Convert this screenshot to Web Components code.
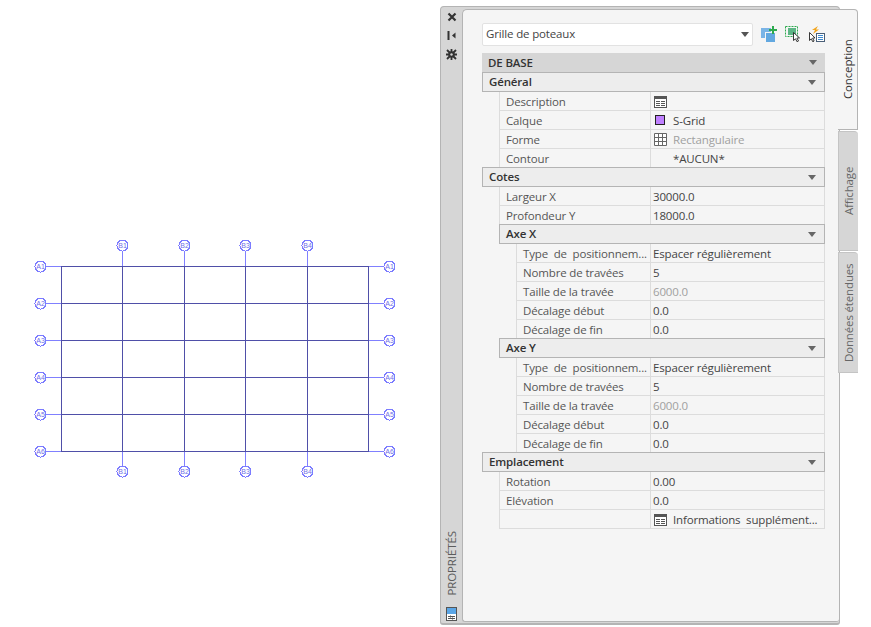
<!DOCTYPE html>
<html>
<head>
<meta charset="utf-8">
<title>Grille de poteaux</title>
<style>
  html, body { margin: 0; padding: 0; background: #fff; }
  body { width: 871px; height: 627px; overflow: hidden; display: flex; font-family: "Open Sans", "Liberation Sans", sans-serif; }
</style>
</head>
<body>
<grid-drawing></grid-drawing>
<props-palette>
  <combo-box slot="combo" value="Grille de poteaux"></combo-box>
  <prop-header kind="top">DE BASE</prop-header>
  <prop-header>Général</prop-header>
  <prop-row label="Description" icon="table"></prop-row>
  <prop-row label="Calque" icon="swatch" value="S-Grid"></prop-row>
  <prop-row label="Forme" icon="grid" value="Rectangulaire" muted></prop-row>
  <prop-row label="Contour" value="*AUCUN*" indent-value></prop-row>
  <prop-header>Cotes</prop-header>
  <prop-row label="Largeur X" value="30000.0"></prop-row>
  <prop-row label="Profondeur Y" value="18000.0"></prop-row>
  <prop-header level="1">Axe X</prop-header>
  <prop-row level="1" label="Type  de  positionnem..." value="Espacer régulièrement"></prop-row>
  <prop-row level="1" label="Nombre de travées" value="5"></prop-row>
  <prop-row level="1" label="Taille de la travée" value="6000.0" muted></prop-row>
  <prop-row level="1" label="Décalage début" value="0.0"></prop-row>
  <prop-row level="1" label="Décalage de fin" value="0.0"></prop-row>
  <prop-header level="1">Axe Y</prop-header>
  <prop-row level="1" label="Type  de  positionnem..." value="Espacer régulièrement"></prop-row>
  <prop-row level="1" label="Nombre de travées" value="5"></prop-row>
  <prop-row level="1" label="Taille de la travée" value="6000.0" muted></prop-row>
  <prop-row level="1" label="Décalage début" value="0.0"></prop-row>
  <prop-row level="1" label="Décalage de fin" value="0.0"></prop-row>
  <prop-header>Emplacement</prop-header>
  <prop-row label="Rotation" value="0.00"></prop-row>
  <prop-row label="Elévation" value="0.0"></prop-row>
  <prop-row label="" icon="table" value="Informations  supplément..."></prop-row>
</props-palette>
<script>
  const ICONS = {
    table: '<svg width="13" height="12" viewBox="0 0 13 12"><rect x=".5" y=".5" width="12" height="11" fill="#fff" stroke="#555"/><path d="M1 1h11v2H1z" fill="#555"/><path d="M2 5.500h4M7 5.500h4M2 7.500h4M7 7.500h4M2 9.500h4M7 9.500h4" stroke="#555"/></svg>',
    swatch: '<svg width="13" height="12" viewBox="0 0 13 12"><rect x="1.500" y=".5" width="9" height="9" fill="#bf80ff" stroke="#222"/></svg>',
    grid: '<svg width="13" height="13" viewBox="0 0 13 13"><path d="M.5.5h12v12H.5zM4.500.5v12M8.500.5v12M.5 4.500h12M.5 8.500h12" fill="#fff" stroke="#666"/></svg>'
  };

  class GridDrawing extends HTMLElement {
    constructor () {
      super();
      const shadowRoot = this.attachShadow({ mode: 'open' });
      const xs = [61.5, 122.5, 184.5, 245.5, 307.5, 368.5];
      const ys = [266.5, 303.5, 340.5, 377.5, 414.5, 451.5];
      let lines = '';
      let bubbles = '';
      const bubble = (cx, cy, t) => `<circle cx="${cx}" cy="${cy}" r="5.5" fill="#fff" stroke="#7c7cff" shape-rendering="crispEdges"/>` +
        `<text x="${cx}" y="${cy + 2.5}" text-anchor="middle" font-size="7" fill="#7070e8">${t}</text>`;
      ys.forEach((y, i) => {
        lines += `<path d="M46 ${y}H61M369 ${y}H384" stroke="#8080ff"/>`;
        bubbles += bubble(40.5, y, 'A' + (i + 1)) + bubble(389.5, y, 'A' + (i + 1));
      });
      xs.forEach((x, i) => {
        if (i > 0 && i < 5) {
          lines += `<path d="M${x} 251V266M${x} 452V467" stroke="#8080ff"/>`;
          bubbles += bubble(x, 245.5, 'B' + i) + bubble(x, 471.5, 'B' + i);
        }
      });
      ys.forEach((y) => { lines += `<path d="M61 ${y}H369" stroke="#4f4fa8"/>`; });
      xs.forEach((x) => { lines += `<path d="M${x} 266V452" stroke="#4f4fa8"/>`; });
      shadowRoot.innerHTML = `
        <style>
          :host { display: block; width: 440px; height: 627px; flex: none; }
          svg { display: block; }
          text { font-family: "Liberation Sans", sans-serif; }
        </style>
        <svg width="440" height="627" shape-rendering="crispEdges">${lines}${bubbles}</svg>`;
    }
  }
  customElements.define('grid-drawing', GridDrawing);

  class PropsPalette extends HTMLElement {
    constructor () {
      super();
      const shadowRoot = this.attachShadow({ mode: 'open' });
      shadowRoot.innerHTML = `
        <style>
          :host { display: flex; width: 431px; height: 627px; flex: none; padding-top: 6px; box-sizing: border-box; font-size: 11.5px; letter-spacing: -.15px; color: #444; }
          .frame { width: 400px; height: 619px; flex: none; display: flex; box-sizing: border-box; background: #d6d6d6; border: 1px solid #b4b4b4; border-bottom-width: 2px; border-radius: 4px 4px 3px 3px; }
          .strip { width: 21px; flex: none; display: flex; flex-direction: column; align-items: center; box-sizing: border-box; }
          .btn { height: 19px; flex: none; display: flex; align-items: center; justify-content: center; }
          .title { margin-top: auto; writing-mode: vertical-rl; transform: rotate(180deg); color: #5c5c5c; font-size: 11.5px; letter-spacing: -.1px; }
          .foot { width: 11px; height: 14px; margin: 11px 0 2px; flex: none; }
          .inner { flex: 1; background: #f5f5f5; border: 1px solid #b4b4b4; border-right: 0; border-radius: 5px 0 3px 3px; margin: 2px 0 1px; padding: 13px 14px 0 19px; box-sizing: border-box; min-width: 0; }
          .combo-row { display: flex; align-items: center; height: 22px; margin-bottom: 8px; }
          .tools { display: flex; gap: 8px; margin-left: 8px; }
          .tabs { width: 20px; flex: none; display: flex; flex-direction: column; gap: 1px; margin: 3px 0 0 -2px; position: relative; }
          .tab { writing-mode: vertical-rl; transform: rotate(180deg); box-sizing: border-box; background: #d6d6d6; color: #666; border: 1px solid #c4c4c4; border-left: 0; border-radius: 0 0 0 4px; width: 20px; display: flex; align-items: center; justify-content: center; flex: none; }
          .tab.active { background: #f5f5f5; color: #333; height: 121px; border: 1px solid #b4b4b4; border-right: 0; border-radius: 0 0 0 4px; }
        </style>
        <div class="frame">
          <div class="strip">
            <div class="btn"><svg width="10" height="10" viewBox="0 0 10 10"><path d="M1.500 1.500l7 7M8.500 1.500l-7 7" stroke="#333" stroke-width="2.200"/></svg></div>
            <div class="btn"><svg width="9" height="9" viewBox="0 0 9 9"><path d="M1.500 0v9" stroke="#333" stroke-width="2"/><path d="M8.500 1.500v6L5 4.500z" fill="#333"/></svg></div>
            <div class="btn"><svg width="11" height="11" viewBox="0 0 11 11"><path d="M1 1l9 9M10 1l-9 9M5.500 0v11M0 5.500h11" stroke="#333" stroke-width="1.800"/><circle cx="5.500" cy="5.500" r="3.200" fill="#333"/><circle cx="5.500" cy="5.500" r="1.200" fill="#d6d6d6"/></svg></div>
            <div class="title">PROPRIÉTÉS</div>
            <svg class="foot" viewBox="0 0 11 14"><rect x=".5" y=".5" width="10" height="13" fill="#fff" stroke="#555"/><rect x="1" y="1" width="9" height="6" fill="#5ba6e6"/><path d="M2 9.500h7M2 11.500h7M4.500 8.500v2M6.500 10.500v2" stroke="#555"/></svg>
          </div>
          <div class="inner">
            <div class="combo-row">
              <slot name="combo"></slot>
              <div class="tools">
                <svg width="16" height="16" viewBox="0 0 16 16"><rect x="0" y="2" width="10" height="10" fill="#7ab4e6"/><rect x="4.500" y="6.500" width="10" height="10" fill="#62a8e0" stroke="#f5f5f5"/><path d="M12 0v8M8 4h8" stroke="#2eaa4e" stroke-width="2"/></svg>
                <svg width="16" height="16" viewBox="0 0 16 16"><rect x=".5" y=".5" width="12" height="10" fill="none" stroke="#2eaa4e" stroke-dasharray="2 1"/><rect x="3" y="2" width="8" height="7" fill="#5cb585"/><path d="M8.500 6.500v8l2-1.700 1.600 3 1.400-.8-1.600-2.900 2.600-.2z" fill="#fff" stroke="#222" stroke-width=".9"/></svg>
                <svg width="16" height="16" viewBox="0 0 16 16"><path d="M9 0L3 4h3L4 8l6-4.500H7l2-3.500z" fill="#f2a51c"/><path d="M.5 6.500v8l1.800-1.700 1.500 3 1.300-.8-1.500-2.900 2.400-.2z" fill="#fff" stroke="#222" stroke-width=".9"/><rect x="7.500" y="7.500" width="8" height="8" fill="#fff" stroke="#4a5f78"/><path d="M9 9.500h5M9 11.500h5M9 13.500h5" stroke="#3d8ad0"/></svg>
              </div>
            </div>
            <slot></slot>
          </div>
        </div>
        <div class="tabs">
          <div class="tab active">Conception</div>
          <div class="tab" style="height:120px">Affichage</div>
          <div class="tab" style="height:121px">Données étendues</div>
        </div>`;
    }
  }
  customElements.define('props-palette', PropsPalette);

  class ComboBox extends HTMLElement {
    constructor () {
      super();
      const shadowRoot = this.attachShadow({ mode: 'open' });
      shadowRoot.innerHTML = `
        <style>
          :host { display: flex; align-items: center; justify-content: space-between; width: 271px; height: 23px; background: #fff; border: 1px solid #e2e2e2; box-sizing: border-box; padding: 0 3px 2px 3px; color: #444; border-radius: 2px; }
          i { width: 0; height: 0; border: 4px solid transparent; border-top: 5px solid #555; border-bottom: 0; margin-top: 2px; }
        </style>
        <span>${this.getAttribute('value')}</span><i></i>`;
    }
  }
  customElements.define('combo-box', ComboBox);

  class PropHeader extends HTMLElement {
    constructor () {
      super();
      const shadowRoot = this.attachShadow({ mode: 'open' });
      const level = +this.getAttribute('level') || 0;
      const top = this.getAttribute('kind') === 'top';
      shadowRoot.innerHTML = `
        <style>
          :host { display: flex; align-items: center; justify-content: space-between; height: 20px; box-sizing: border-box; margin-top: ${top ? 0 : -1}px; margin-left: ${level ? 17 : 0}px; padding: 0 8px 0 6px; font-weight: 600; color: #333; background: ${top ? '#d6d6d6' : '#ededed'}; border: 1px solid #b4b4b4; border-width: ${top ? '0 0 1px 0' : '1px'}; }
          span { margin-bottom: ${top ? 0 : 2}px; }
          i { width: 0; height: 0; border: 4px solid transparent; border-top: 5px solid #666; border-bottom: 0; }
        </style>
        <span><slot></slot></span><i></i>`;
    }
  }
  customElements.define('prop-header', PropHeader);

  class PropRow extends HTMLElement {
    constructor () {
      super();
      const shadowRoot = this.attachShadow({ mode: 'open' });
      const level = +this.getAttribute('level') || 0;
      const icon = this.getAttribute('icon');
      const muted = this.hasAttribute('muted');
      const value = this.getAttribute('value') || '';
      shadowRoot.innerHTML = `
        <style>
          :host { display: flex; height: 19px; box-sizing: border-box; margin-left: ${level ? 34 : 17}px; border: 1px solid #dcdcdc; border-width: 0 1px 1px 1px; color: #555; white-space: pre; line-height: 19px; }
          .label { width: ${level ? 134 : 151}px; flex: none; box-sizing: border-box; padding-left: 6px; border-right: 1px solid #dcdcdc; overflow: hidden; }
          .value { flex: 1; display: flex; align-items: flex-start; overflow: hidden; padding-left: ${icon ? 3 : 2}px; color: ${muted ? '#a0a0a0' : '#444'}; box-sizing: border-box; }
          .ico { display: flex; width: 19px; flex: none; padding-top: ${icon === 'grid' ? 3 : 4}px; }
          ${this.hasAttribute('indent-value') ? '.value { padding-left: 22px; }' : ''}
        </style>
        <div class="label">${this.getAttribute('label')}</div>
        <div class="value">${icon ? `<span class="ico">${ICONS[icon]}</span>` : ''}<span>${value}</span></div>`;
    }
  }
  customElements.define('prop-row', PropRow);
</script>
</body>
</html>
